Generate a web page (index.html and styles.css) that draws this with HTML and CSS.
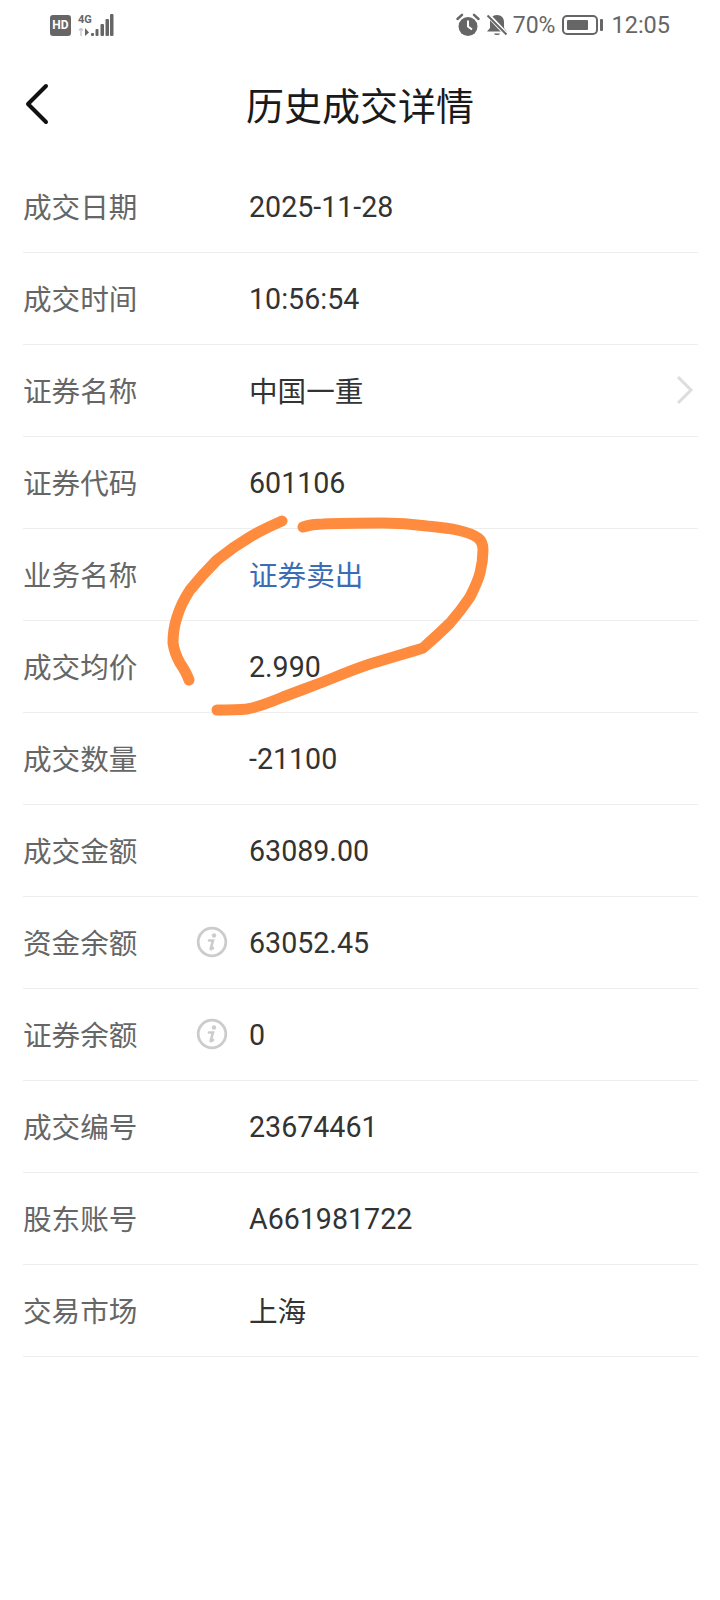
FILE: index.html
```html
<!DOCTYPE html>
<html lang="zh-CN">
<head>
<meta charset="UTF-8">
<title>历史成交详情</title>
<link rel="stylesheet" href="styles.css">
</head>
<body>
<div class="page">
    <div class="statusbar">
        <div class="status-left">
            <span class="hd">HD</span>
            <span class="net">
                <span class="net-text">4G</span>
                <svg class="arrows" width="13" height="8" viewBox="0 0 13 8"><path d="M3 0v8M1 2.500 3 0l2 2.500" stroke="#ccc" stroke-width="1.500" fill="none"/><path d="M7 0v8l4-3.500z" fill="#666"/></svg>
            </span>
            <svg class="signal" width="23" height="23" viewBox="0 0 23 23">
                <rect x="0" y="19" width="3" height="3" rx="1"/>
                <rect x="4.500" y="15" width="3" height="7" rx="1"/>
                <rect x="9.500" y="10" width="3.500" height="12" rx="1"/>
                <rect x="14.500" y="5" width="3.500" height="17" rx="1"/>
                <rect x="19" y="0" width="3.500" height="22" rx="1"/>
            </svg>
        </div>
        <div class="status-right">
            <svg class="st-icon" width="24" height="24" viewBox="0 0 24 24">
                <circle cx="12" cy="13.500" r="9.500" fill="#666"/>
                <path d="M1.500 6 6 1.800M22.500 6 18 1.800" stroke="#666" stroke-width="2.400" stroke-linecap="round"/>
                <path d="M12 7.500v6l4 3" stroke="#fff" stroke-width="2" fill="none"/>
            </svg>
            <svg class="st-icon bell" width="24" height="24" viewBox="0 0 24 24">
                <path d="M12 2c4.500 0 7 3 7 7v6l3 3.500H2L5 15V9c0-4 2.500-7 7-7z" fill="#666"/>
                <path d="M9 20.500h6c-.5 2-5.500 2-6 0z" fill="#666"/>
                <path d="M3 2l19 20" stroke="#fff" stroke-width="4.500"/>
                <path d="M2.500 2.500l19 19" stroke="#666" stroke-width="2"/>
            </svg>
            <span class="pct">70%</span>
            <span class="battery"><span class="battery-fill"></span></span>
            <span class="battery-tip"></span>
            <span class="clock">12:05</span>
        </div>
    </div>

    <div class="header">
        <svg class="back" width="28" height="44" viewBox="0 0 28 44"><path d="M23 3 5 21l18 18" fill="none" stroke="#111" stroke-width="4" stroke-linecap="round" stroke-linejoin="round"/></svg>
        <h1>历史成交详情</h1>
    </div>

    <div class="list">
        <div class="row"><div class="label">成交日期</div><div class="value num">2025-11-28</div></div>
        <div class="row"><div class="label">成交时间</div><div class="value num">10:56:54</div></div>
        <div class="row">
            <div class="label">证券名称</div><div class="value">中国一重</div>
            <svg class="more" width="18" height="30" viewBox="0 0 18 30"><path d="M2 2l13 13L2 28" fill="none" stroke="#ddd" stroke-width="3"/></svg>
        </div>
        <div class="row"><div class="label">证券代码</div><div class="value num">601106</div></div>
        <div class="row"><div class="label">业务名称</div><div class="value blue">证券卖出</div></div>
        <div class="row"><div class="label">成交均价</div><div class="value num">2.990</div></div>
        <div class="row"><div class="label">成交数量</div><div class="value num">-21100</div></div>
        <div class="row"><div class="label">成交金额</div><div class="value num">63089.00</div></div>
        <div class="row">
            <div class="label">资金余额
                <svg class="info" width="32" height="32" viewBox="0 0 32 32"><circle cx="16" cy="16" r="13.800" fill="none" stroke="#ccc" stroke-width="2.800"/><circle cx="18" cy="9.500" r="2.200" fill="#ccc"/><path d="M13 14.500h4l-2.300 8c-.2.800.5 1 2.300-.5" fill="none" stroke="#ccc" stroke-width="2.600" stroke-linecap="round"/></svg>
            </div>
            <div class="value num">63052.45</div>
        </div>
        <div class="row">
            <div class="label">证券余额
                <svg class="info" width="32" height="32" viewBox="0 0 32 32"><circle cx="16" cy="16" r="13.800" fill="none" stroke="#ccc" stroke-width="2.800"/><circle cx="18" cy="9.500" r="2.200" fill="#ccc"/><path d="M13 14.500h4l-2.300 8c-.2.800.5 1 2.300-.5" fill="none" stroke="#ccc" stroke-width="2.600" stroke-linecap="round"/></svg>
            </div>
            <div class="value num">0</div>
        </div>
        <div class="row"><div class="label">成交编号</div><div class="value num">23674461</div></div>
        <div class="row"><div class="label">股东账号</div><div class="value num">A661981722</div></div>
        <div class="row"><div class="label">交易市场</div><div class="value">上海</div></div>
    </div>

    <!-- 手写的圈注 -->
    <svg class="scribble" width="720" height="1600" viewBox="0 0 720 1600">
        <path d="M282 521C268 527 260 531 250 537C238 544 228 551 217 560C207 570 198 580 190 590C184 599 180 607 177 617C174 626 173 634 173 643C174 650 176 656 180 663C184 669 187 674 189 680"/>
        <path d="M303 527C309 525 316 524 323 524C343 523 363 523 383 523C398 523 412 524 427 526C438 527 448 528 457 530C466 532 473 534 478 538C482 541 483 545 483 550C483 558 482 565 480 573C478 581 474 589 470 597C464 606 457 615 450 623C441 632 432 640 423 648C404 654 386 659 367 665C352 670 338 676 323 682C310 687 296 692 283 697C271 702 259 707 247 709C237 710 227 710 217 710"/>
    </svg>
</div>
</body>
</html>
```

FILE: styles.css
```css
* {
    box-sizing: border-box;
}
body {
    margin: 0;
    background-color: #fff;
    font-family: Roboto, "Noto Sans CJK SC", sans-serif;
}
.page {
    position: relative;
    width: 720px;
    height: 1600px;
    overflow: hidden;
}
.statusbar {
    display: flex;
    justify-content: space-between;
    align-items: center;
    height: 50px;
    padding: 0 50px;
    color: #666;
}
.status-left,
.status-right {
    display: flex;
    align-items: center;
}
.hd {
    width: 21px;
    height: 21px;
    margin-right: 7px;
    border-radius: 3px;
    background-color: #666;
    color: #fff;
    font-size: 12px;
    font-weight: bold;
    line-height: 21px;
    text-align: center;
}
.net {
    display: flex;
    flex-direction: column;
    width: 13px;
    height: 22px;
    line-height: 0;
}
.net-text {
    height: 14px;
    font-size: 11px;
    font-weight: bold;
    line-height: 11px;
}
.signal {
    fill: #666;
}
.bell {
    margin-left: 5px;
}
.pct {
    margin-left: 4px;
    font-size: 23px;
}
.battery {
    width: 36px;
    height: 20px;
    margin-left: 7px;
    padding: 3px;
    border: 2px solid #666;
    border-radius: 5px;
}
.battery-fill {
    display: block;
    width: 21px;
    height: 10px;
    border-radius: 1px;
    background-color: #666;
}
.battery-tip {
    width: 3px;
    height: 12px;
    margin-left: 2px;
    border-radius: 1px;
    background-color: #666;
}
.clock {
    margin-left: 8px;
    font-size: 23.500px;
}
.header {
    position: relative;
    display: flex;
    align-items: center;
    justify-content: center;
    height: 111px;
    padding-bottom: 4px;
}
.back {
    position: absolute;
    left: 23px;
    top: 33px;
}
h1 {
    margin: 0;
    font-size: 38px;
    font-weight: 400;
    color: #1a1a1a;
}
.list {
    width: 698px;
    padding-left: 23px;
}
.row {
    display: flex;
    align-items: center;
    height: 92px;
    padding-bottom: 2px;
    border-bottom: 1px solid #eee;
}
.label {
    display: flex;
    align-items: center;
    justify-content: space-between;
    width: 205px;
    margin-right: 21px;
    font-size: 28.600px;
    color: #666;
}
.value {
    flex: 1;
    font-size: 28.600px;
    color: #333;
}
.num {
    padding-top: 3px;
}
.blue {
    color: #3a6db5;
}
.more {
    margin-right: 4px;
}
.scribble {
    position: absolute;
    left: 0;
    top: 0;
    fill: none;
    stroke: #ff8c3e;
    stroke-width: 11;
    stroke-linecap: round;
    stroke-linejoin: round;
}
```
